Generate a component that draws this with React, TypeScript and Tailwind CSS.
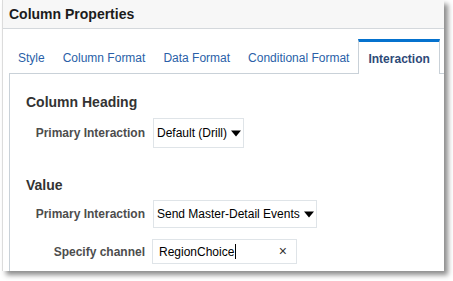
import { ReactNode } from 'react'

const TABS = ['Style', 'Column Format', 'Data Format', 'Conditional Format', 'Interaction'] as const
const ACTIVE_TAB = 'Interaction'

function Caret() {
  return (
    <svg width="10" height="7" viewBox="0 0 10 7" className="shrink-0">
      <path d="M0 0.5 L10 0.5 L5 6.5 Z" fill="#000" />
    </svg>
  )
}

function Row({ label, children, className }: { label: string; children: ReactNode; className?: string }) {
  return (
    <div className={`flex items-center ${className ?? ''}`}>
      <div className="w-[119px] text-right text-[12px] font-bold whitespace-nowrap text-[#4d4d4d]">{label}</div>
      <div className="ml-[8px]">{children}</div>
    </div>
  )
}

function SelectBox({ value, width, height }: { value: string; width: string; height: string }) {
  return (
    <div
      className={`flex items-center justify-between gap-[4px] border border-[#dfe4e8] bg-white pl-[3px] pr-[4px] text-[12px] text-black ${width} ${height}`}
    >
      <span className="whitespace-nowrap">{value}</span>
      <Caret />
    </div>
  )
}

export default function App() {
  return (
    <div className="h-[281px] w-[453px] overflow-hidden bg-white font-['Liberation_Sans',Arial,sans-serif]">
      <div className="ml-[2px] flex h-[271px] w-[442px] flex-col overflow-hidden border-l border-[#dcdcdc] bg-white shadow-[4px_4px_5px_rgba(0,0,0,0.45)]">
        <div className="flex h-[29px] shrink-0 items-center border-b border-[#d4d8dc] bg-[#f7f7f7] pl-[6px] text-[14px] font-bold text-[#1c1c1c]">
          Column Properties
        </div>
        <div className="mt-[10px] flex h-[34px] shrink-0 items-stretch pl-[6px]">
          {TABS.map((tab) =>
            tab === ACTIVE_TAB ? (
              <div
                key={tab}
                className="relative z-10 -mb-px flex shrink-0 items-center border-x border-t-[3px] border-x-[#c9d1d8] border-t-[#0572ce] bg-white px-[9px] pt-[1px] text-[12px] font-bold whitespace-nowrap text-[#2e4a78]"
              >
                {tab}
              </div>
            ) : (
              <div
                key={tab}
                className="flex shrink-0 items-center px-[9px] pt-[3px] text-[12px] whitespace-nowrap text-[#2a5fa8]"
              >
                {tab}
              </div>
            )
          )}
        </div>
        <div className="ml-[6px] flex-1 border-l border-t border-[#c9d1d8] pl-[16px]">
          <div className="mt-[18px] text-[14px] font-bold text-[#333]">Column Heading</div>
          <Row label="Primary Interaction" className="mt-[5px]">
            <SelectBox value="Default (Drill)" width="w-[91px]" height="h-[30px]" />
          </Row>
          <div className="mt-[27px] text-[14px] font-bold text-[#333]">Value</div>
          <Row label="Primary Interaction" className="mt-[4px]">
            <SelectBox value="Send Master-Detail Events" width="w-[164px]" height="h-[28px]" />
          </Row>
          <Row label="Specify channel" className="mt-[11px]">
            <div className="-ml-px flex h-[25px] w-[145px] items-center justify-between border border-[#dfe4e8] bg-white pl-[6px] pr-[9px] text-[12px] text-black">
              <span className="flex items-center">
                RegionChoice
                <span className="ml-px inline-block h-[15px] w-px bg-black" />
              </span>
              <span className="text-[14px] text-[#333]">×</span>
            </div>
          </Row>
        </div>
      </div>
    </div>
  )
}
